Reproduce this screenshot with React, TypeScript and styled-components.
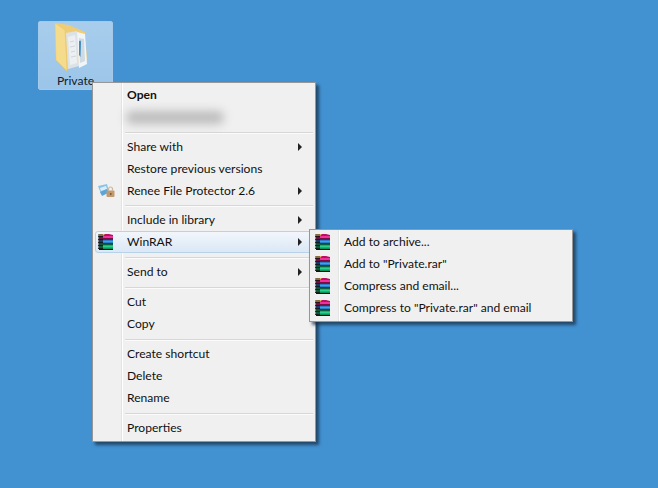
import React from "react";
import styled, { createGlobalStyle } from "styled-components";

const Global = createGlobalStyle`
  html, body { margin: 0; padding: 0; background: #4292d2; }
  * { box-sizing: border-box; }
`;

const Desktop = styled.div`
  position: relative;
  width: 658px;
  height: 488px;
  overflow: hidden;
  background: #4292d2;
  font-family: "Lato", "Open Sans", sans-serif;
  font-size: 12.1px;
  color: #111;
`;

const FolderTile = styled.div`
  position: absolute;
  left: 38px;
  top: 21px;
  width: 75px;
  height: 69px;
  display: flex;
  flex-direction: column;
  align-items: center;
  border: 1px solid #a5c9e8;
  border-radius: 2px;
  background: linear-gradient(180deg, #a8cdec 0%, #9bc5e9 100%);
`;

const FolderLabel = styled.span`
  line-height: 16px;
  color: #10202c;
`;

const Menu = styled.div<{ $left: number; $top: number; $width: number; $gutter: number }>`
  position: absolute;
  left: ${(p) => p.$left}px;
  top: ${(p) => p.$top}px;
  width: ${(p) => p.$width}px;
  padding: 1px 2px 2px;
  border: 1px solid #979797;
  box-shadow: 3px 3px 3px rgba(20, 40, 60, 0.7);
  background: linear-gradient(
    90deg,
    #f0f0f0 ${(p) => p.$gutter}px,
    #e2e3e3 ${(p) => p.$gutter}px,
    #e2e3e3 ${(p) => p.$gutter + 1}px,
    #ffffff ${(p) => p.$gutter + 1}px,
    #ffffff ${(p) => p.$gutter + 2}px,
    #f0f0f0 ${(p) => p.$gutter + 2}px
  );
`;

const Row = styled.div<{ $active?: boolean }>`
  display: grid;
  grid-template-columns: 31px 1fr 14px;
  align-items: center;
  height: 22px;
  border-radius: 3px;
  border: 1px solid ${(p) => (p.$active ? "#b8d2ea" : "transparent")};
  background: ${(p) =>
    p.$active ? "linear-gradient(180deg, #f2f6fb 0%, #dbe8f6 100%)" : "transparent"};
`;

const IconSlot = styled.span`
  display: flex;
  align-items: center;
  justify-content: flex-start;
  width: 22px;
  height: 18px;
  margin-left: 1px;
`;

const Label = styled.span<{ $bold?: boolean }>`
  font-weight: ${(p) => (p.$bold ? 700 : 400)};
  white-space: nowrap;
  line-height: 16px;
`;

const Arrow = styled.span`
  width: 0;
  height: 0;
  border-left: 4px solid #222;
  border-top: 4px solid transparent;
  border-bottom: 4px solid transparent;
`;

const Separator = styled.div<{ $h?: number }>`
  height: ${(p) => p.$h ?? 8}px;
  margin-left: 30px;
  display: flex;
  flex-direction: column;
  justify-content: center;
  &::before {
    content: "";
    height: 1px;
    background: #d7d7d7;
    box-shadow: 0 1px 0 #fbfbfb;
  }
`;

const BlurRow = styled.div`
  height: 22px;
  display: flex;
  align-items: center;
  padding-left: 31px;
`;

const BlurBar = styled.div`
  width: 98px;
  height: 13px;
  border-radius: 6px;
  background: #bcbcbc;
  filter: blur(5px);
`;

const Rar = () => (
  <svg width="18" height="18" viewBox="0 0 18 18">
    <path d="M2 1h10l4 1v4H2z" fill="#b80f62" />
    <path d="M2 1h6L6 3H2z" fill="#e3b868" />
    <path d="M2 6h14v5H2z" fill="#1c5aa8" />
    <path d="M2 11h14v5H2z" fill="#0c8f5a" />
    <path d="M6 3h10v2H6z" fill="#f0309c" />
    <path d="M6 7.500h10v2H6z" fill="#38a5e8" />
    <path d="M6 12.500h10v2H6z" fill="#2ad08c" />
    <path
      d="M1 2h5M1 3.500h5M1 5h5M1 6.500h5M1 8h5M1 9.500h5M1 11h5M1 12.500h5M1 14h5M1 15.500h5"
      stroke="#141414"
      strokeWidth="0.9"
      fill="none"
    />
    <path d="M2 16.500h14" stroke="#111" strokeWidth="1" />
    <path d="M6 6h10M6 11h10" stroke="#111" strokeWidth="0.8" />
  </svg>
);

const Renee = () => (
  <svg width="18" height="16" viewBox="0 0 18 16">
    <path d="M1 3l9-2 2 7-8 3z" fill="#8cc4e8" />
    <path d="M3 5l6-2 1 3-6 2z" fill="#d8effa" />
    <path d="M3 9l7-3 1 4-6 3z" fill="#5da5d6" />
    <rect x="9.500" y="7.500" width="8" height="6.500" rx="1" fill="#c39a70" />
    <path d="M11.500 7.500V6a2 2 0 0 1 4 0V7.500" fill="none" stroke="#cdb79c" strokeWidth="1.200" />
    <rect x="13" y="10" width="1.500" height="2" fill="#7a5a3c" />
  </svg>
);

const FolderIcon = () => (
  <svg width="47" height="51" viewBox="0 0 47 51">
    <path d="M3 1l14 2 16 7 2 28-21 10-10-12z" fill="#efcd76" />
    <path d="M14 11l11-2 2 35-11 3z" fill="#dde2e6" />
    <path d="M16 15l7-2 2 28-7 2z" fill="#edf0f2" />
    <path d="M18 20l4-1M18 25l5-1M19 30l4-1M19 35l5-1" stroke="#cfd6dc" strokeWidth="1" />
    <path d="M25 10l8 2 2 30-8 4z" fill="#f2f5f7" />
    <path d="M27 16l5 1 1 22-5 2z" fill="#cfdae2" />
    <path d="M27 19c1.500-1 2-1 2 2l-.5 14-1.500-2z" fill="#3f8cc0" />
    <path d="M3 1l10 7 2 41-11-11z" fill="#f5dc8c" stroke="#e6c264" strokeWidth="0.5" />
  </svg>
);

type Item =
  | { sep: number }
  | { label: string; bold?: boolean; arrow?: boolean; icon?: "rar" | "renee"; active?: boolean }
  | { blur: true };

const main: Item[] = [
  { label: "Open", bold: true },
  { blur: true },
  { sep: 8 },
  { label: "Share with", arrow: true },
  { label: "Restore previous versions" },
  { label: "Renee File Protector 2.6", arrow: true, icon: "renee" },
  { sep: 7 },
  { label: "Include in library", arrow: true },
  { label: "WinRAR", arrow: true, icon: "rar", active: true },
  { sep: 8 },
  { label: "Send to", arrow: true },
  { sep: 8 },
  { label: "Cut" },
  { label: "Copy" },
  { sep: 8 },
  { label: "Create shortcut" },
  { label: "Delete" },
  { label: "Rename" },
  { sep: 8 },
  { label: "Properties" },
];

const sub = ["Add to archive...", 'Add to "Private.rar"', "Compress and email...", 'Compress to "Private.rar" and email'];

export default function App() {
  return (
    <Desktop>
      <Global />
      <FolderTile>
        <FolderIcon />
        <FolderLabel>Private</FolderLabel>
      </FolderTile>
      <Menu $left={92} $top={82} $width={224} $gutter={28}>
        {main.map((it, i) => {
          if ("sep" in it) return <Separator key={i} $h={it.sep} />;
          if ("blur" in it)
            return (
              <BlurRow key={i}>
                <BlurBar />
              </BlurRow>
            );
          return (
            <Row key={i} $active={it.active}>
              <IconSlot>{it.icon === "rar" ? <Rar /> : it.icon === "renee" ? <Renee /> : null}</IconSlot>
              <Label $bold={it.bold}>{it.label}</Label>
              {it.arrow ? <Arrow /> : <span />}
            </Row>
          );
        })}
      </Menu>
      <Menu $left={309} $top={229} $width={264} $gutter={28}>
        {sub.map((s) => (
          <Row key={s}>
            <IconSlot>
              <Rar />
            </IconSlot>
            <Label>{s}</Label>
            <span />
          </Row>
        ))}
      </Menu>
    </Desktop>
  );
}
